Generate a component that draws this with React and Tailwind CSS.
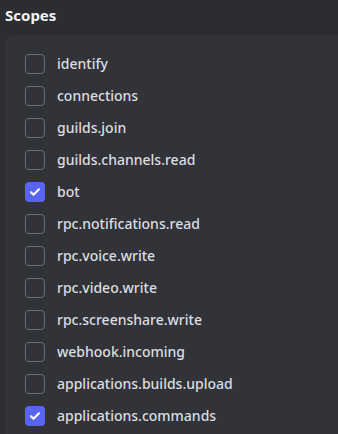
import React from "react";

const scopes = [
    { name: "identify", checked: false },
    { name: "connections", checked: false },
    { name: "guilds.join", checked: false },
    { name: "guilds.channels.read", checked: false },
    { name: "bot", checked: true },
    { name: "rpc.notifications.read", checked: false },
    { name: "rpc.voice.write", checked: false },
    { name: "rpc.video.write", checked: false },
    { name: "rpc.screenshare.write", checked: false },
    { name: "webhook.incoming", checked: false },
    { name: "applications.builds.upload", checked: false },
    { name: "applications.commands", checked: true },
];

const Checkbox = ({ checked }) => (
    checked ? (
        <div className="w-5 h-5 rounded-[4px] bg-[#5865f2] flex items-center justify-center shrink-0">
            <svg width="12" height="12" viewBox="0 0 24 24" fill="none" stroke="#fff" strokeWidth="4" strokeLinecap="round" strokeLinejoin="round">
                <path d="M4 12.5l5 5L20 6.5" />
            </svg>
        </div>
    ) : (
        <div className="w-5 h-5 rounded-[4px] border border-[#6d6f78] shrink-0" />
    )
);

const App = () => {
    return <div className="w-[338px] h-[434px] overflow-hidden bg-[#2b2d31] pl-[5px] pt-[5px]" style={{ fontFamily: '"Noto Sans", sans-serif' }}>
        <h2 className="text-[15px] font-bold text-[#f2f3f5] leading-[20px] h-[30px]">Scopes</h2>
        <div className="bg-[#313338] rounded-tl-[8px] pl-5 pt-[19px] pb-6 min-h-[420px]">
            <div className="flex flex-col gap-3">
                {scopes.map((s) => (
                    <label key={s.name} className="flex items-center gap-3 h-5 cursor-pointer">
                        <Checkbox checked={s.checked} />
                        <span className="text-[14px] font-medium text-[#dbdee1] leading-5">{s.name}</span>
                    </label>
                ))}
            </div>
        </div>
    </div>
}

export default App
